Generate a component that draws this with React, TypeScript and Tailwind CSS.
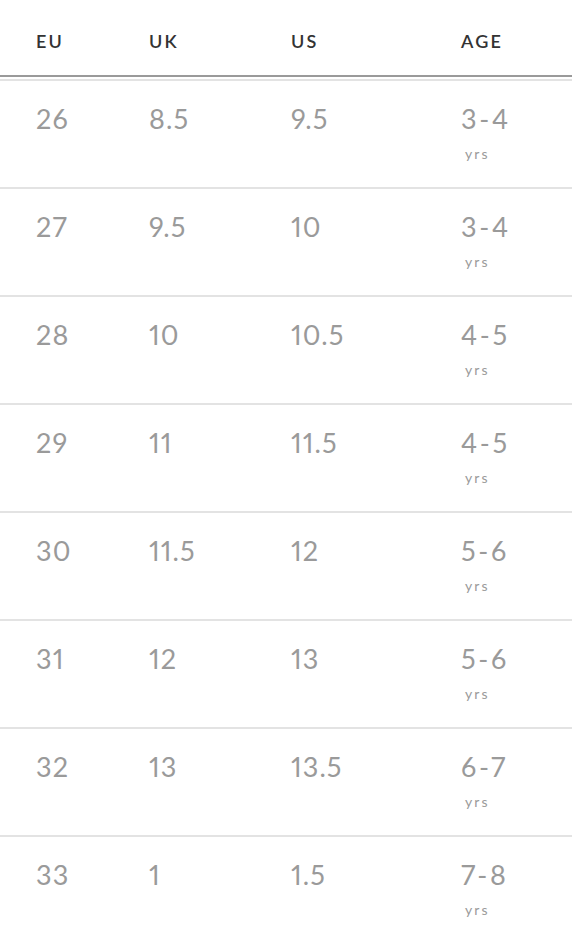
import React from "react";

const rows = [
  ["26", "8.5", "9.5", "3-4"],
  ["27", "9.5", "10", "3-4"],
  ["28", "10", "10.5", "4-5"],
  ["29", "11", "11.5", "4-5"],
  ["30", "11.5", "12", "5-6"],
  ["31", "12", "13", "5-6"],
  ["32", "13", "13.5", "6-7"],
  ["33", "1", "1.5", "7-8"],
];

export default function App() {
  return (
    <div className="w-[572px] h-[941px] bg-white overflow-hidden" style={{ fontFamily: "Lato, 'Open Sans', sans-serif" }}>
      <div className="grid grid-cols-[113px_142px_170px_1fr] pl-[36px] h-[75px] pt-[32px] leading-none text-[18px] font-semibold tracking-[0.12em] text-[#333]">
        <div>EU</div>
        <div>UK</div>
        <div>US</div>
        <div>AGE</div>
      </div>
      <div className="h-[2px] bg-[#9a9a9a]" />
      <div className="h-[2px]" />
      <div className="h-[2px] bg-[#e3e3e3]" />
      {rows.map((r, i) => (
        <div key={i}>
          <div className="grid grid-cols-[113px_142px_170px_1fr] pl-[36px] h-[106px] pt-[24px] text-[27px] font-normal text-[#9a9a9a] tracking-[0.04em] leading-none proportional-nums">
            <div>{r[0]}</div>
            <div>{r[1]}</div>
            <div>{r[2]}</div>
            <div>
              <div className="tracking-[0.1em]">{r[3]}</div>
              <div className="text-[14px] mt-[15px] ml-[4px] tracking-[0.15em]">yrs</div>
            </div>
          </div>
          {i < rows.length - 1 && <div className="h-[2px] bg-[#e3e3e3]" />}
        </div>
      ))}
    </div>
  );
}
